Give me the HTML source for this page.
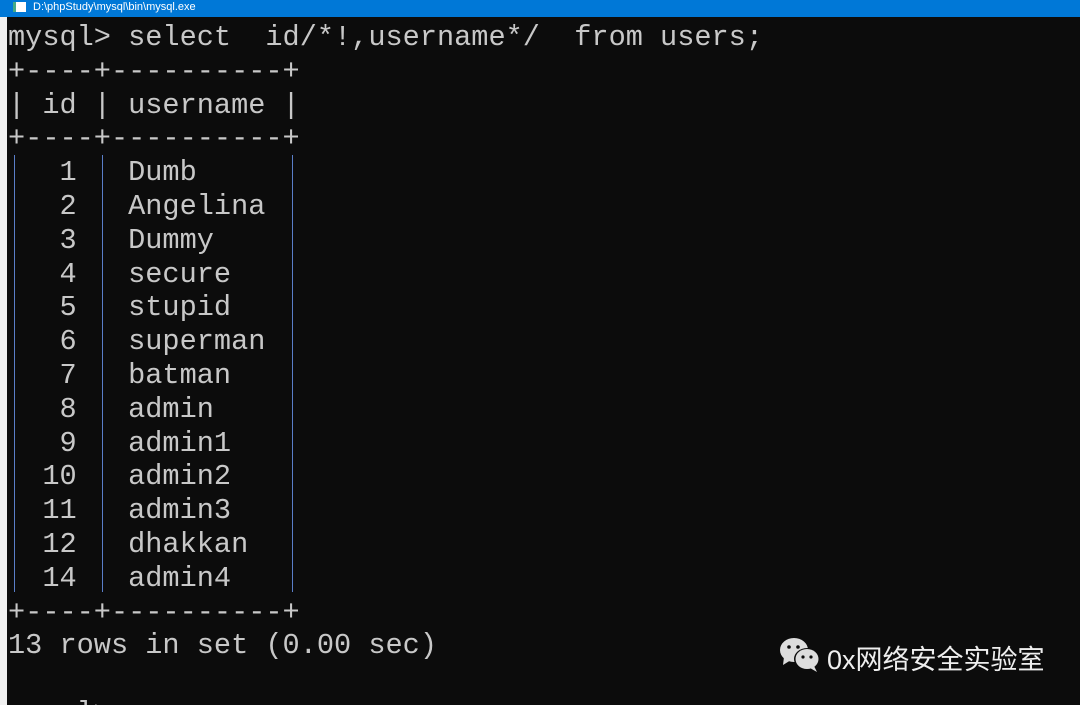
<!DOCTYPE html>
<html><head><meta charset="utf-8"><style>
html,body{margin:0;padding:0;width:1080px;height:705px;overflow:hidden;background:#0c0c0c;position:relative;}
.title{position:absolute;left:0;top:0;width:1080px;height:17px;background:#0078d7;}
.title span{position:absolute;left:33px;top:1px;font:11px "Liberation Sans",sans-serif;color:#fff;}
.ico{position:absolute;left:13px;top:2px;width:10px;height:10px;background:#fff;border-left:3px solid #4a8;}
.lstrip{position:absolute;left:0;top:17px;width:7px;height:688px;background:#f0f0f0;}
pre{position:absolute;left:8px;top:21px;margin:0;font:28.6px/33.8px "Liberation Mono",monospace;color:#c8c8c8;}
.v{position:absolute;width:1px;background:#5a7ec8;top:155px;height:437px;}
.wm{position:absolute;left:827px;top:638px;font:27px "Liberation Sans","Noto Sans CJK SC",sans-serif;color:#eee;}
</style></head><body>
<div class="title"><div class="ico"></div><span>D:\phpStudy\mysql\bin\mysql.exe</span></div>
<div class="lstrip"></div>
<pre>mysql&gt; select  id/*!,username*/  from users;
+----+----------+
| id | username |
+----+----------+
   1   Dumb
   2   Angelina
   3   Dummy
   4   secure
   5   stupid
   6   superman
   7   batman
   8   admin
   9   admin1
  10   admin2
  11   admin3
  12   dhakkan
  14   admin4
+----+----------+
13 rows in set (0.00 sec)

mysql&gt;</pre>
<div class="v" style="left:14px"></div>
<div class="v" style="left:102px"></div>
<div class="v" style="left:292px"></div>
<svg style="position:absolute;left:779px;top:637px" width="44" height="36" viewBox="0 0 44 36">
<ellipse cx="15" cy="13" rx="14" ry="12" fill="#ddd"/>
<path d="M5 20 L4 28 L12 23Z" fill="#ddd"/>
<ellipse cx="28" cy="22" rx="13" ry="11" fill="#0c0c0c"/>
<ellipse cx="28" cy="22" rx="11.5" ry="10" fill="#ddd"/>
<path d="M35 29 L38 35 L31 31Z" fill="#ddd"/>
<circle cx="10" cy="10" r="1.8" fill="#0c0c0c"/><circle cx="19" cy="10" r="1.8" fill="#0c0c0c"/>
<circle cx="24" cy="20" r="1.6" fill="#0c0c0c"/><circle cx="32" cy="20" r="1.6" fill="#0c0c0c"/>
</svg>
<div class="wm">0x网络安全实验室</div>
</body></html>
